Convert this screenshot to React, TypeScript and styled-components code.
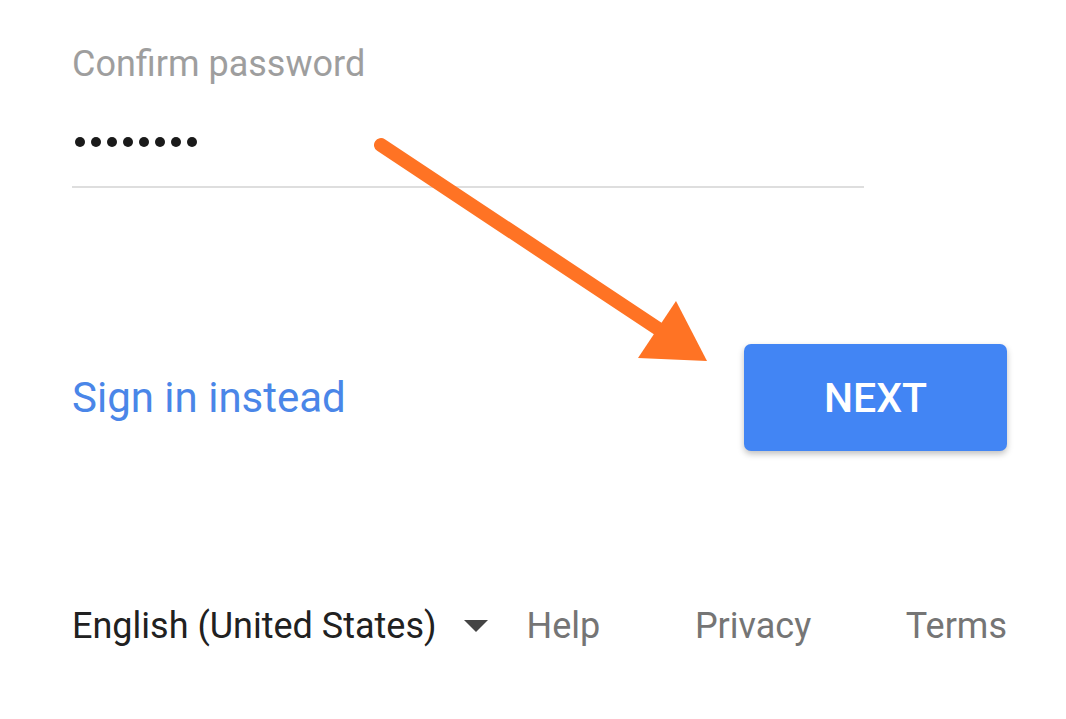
import styled, { createGlobalStyle } from "styled-components";

const GlobalStyle = createGlobalStyle`
  html, body {
    margin: 0;
    padding: 0;
    background: #fff;
    font-family: Roboto, "Liberation Sans", Arial, sans-serif;
  }
`;

const Page = styled.div`
  position: relative;
  width: 1066px;
  height: 719px;
  padding: 40px 59px 0 72px;
  box-sizing: border-box;
  overflow: hidden;
`;

const Field = styled.div`
  width: 792px;
`;

const Label = styled.div`
  font-size: 36px;
  line-height: 48px;
  color: #9e9e9e;
`;

const Dots = styled.div`
  display: flex;
  gap: 6px;
  margin-top: 49px;
  padding-left: 3px;
  height: 10px;
`;

const Dot = styled.span`
  width: 10px;
  height: 10px;
  border-radius: 50%;
  background: #1a1a1a;
`;

const Underline = styled.div`
  margin-top: 39px;
  height: 2px;
  background: #dedede;
`;

const Actions = styled.div`
  display: flex;
  align-items: center;
  justify-content: space-between;
  margin-top: 156px;
`;

const LinkText = styled.a`
  font-size: 42px;
  color: #4a86e8;
  text-decoration: none;
`;

const NextButton = styled.button`
  width: 263px;
  height: 107px;
  border: none;
  border-radius: 7px;
  background: #4285f4;
  color: #fff;
  font-family: Roboto, "Liberation Sans", Arial, sans-serif;
  font-size: 41px;
  font-weight: 500;
  box-shadow: 0 3px 6px rgba(0, 0, 0, 0.25);
`;

const Footer = styled.div`
  display: flex;
  align-items: center;
  margin-top: 151px;
  font-size: 36px;
  line-height: 48px;
`;

const Language = styled.div`
  display: flex;
  align-items: center;
  color: #212121;
`;

const Caret = styled.span`
  width: 0;
  height: 0;
  margin-left: 27px;
  border-left: 12px solid transparent;
  border-right: 12px solid transparent;
  border-top: 12px solid #444;
`;

const FooterLinks = styled.div`
  display: flex;
  flex: 1;
  justify-content: space-between;
  margin-left: 39px;
  color: #757575;
`;

const ArrowOverlay = styled.svg`
  position: absolute;
  left: 0;
  top: 0;
  pointer-events: none;
`;

export default function App() {
  return (
    <Page>
      <GlobalStyle />
      <Field>
        <Label>Confirm password</Label>
        <Dots>
          {Array.from({ length: 8 }).map((_, i) => (
            <Dot key={i} />
          ))}
        </Dots>
        <Underline />
      </Field>
      <Actions>
        <LinkText>Sign in instead</LinkText>
        <NextButton>NEXT</NextButton>
      </Actions>
      <Footer>
        <Language>
          English (United States)
          <Caret />
        </Language>
        <FooterLinks>
          <span>Help</span>
          <span>Privacy</span>
          <span>Terms</span>
        </FooterLinks>
      </Footer>
      <ArrowOverlay width="1066" height="719" viewBox="0 0 1066 719">
        <line
          x1="381"
          y1="145"
          x2="660"
          y2="330"
          stroke="#ff7324"
          strokeWidth="14"
          strokeLinecap="round"
        />
        <polygon points="676,301 638,358 707,361" fill="#ff7324" />
      </ArrowOverlay>
    </Page>
  );
}
